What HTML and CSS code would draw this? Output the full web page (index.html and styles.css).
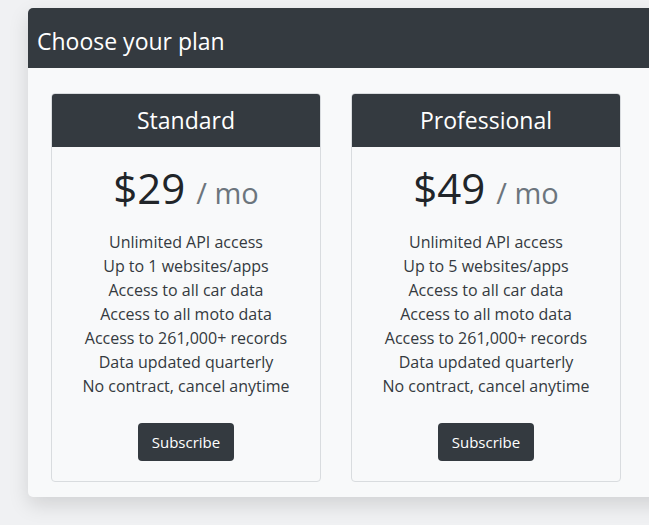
FILE: index.html
```html
<!DOCTYPE html>
<html>
<head>
<meta charset="utf-8">
<link rel="stylesheet" href="styles.css">
</head>
<body>
<div class="page">
  <div class="panel">
    <div class="panel-head">Choose your plan</div>
    <div class="panel-body">
      <div class="plan">
        <div class="plan-head">Standard</div>
        <div class="plan-body">
          <div class="price">$29 <span class="per">/ mo</span></div>
          <ul class="features">
            <li>Unlimited API access</li>
            <li>Up to 1 websites/apps</li>
            <li>Access to all car data</li>
            <li>Access to all moto data</li>
            <li>Access to 261,000+ records</li>
            <li>Data updated quarterly</li>
            <li>No contract, cancel anytime</li>
          </ul>
          <button class="btn">Subscribe</button>
        </div>
      </div>
      <div class="plan">
        <div class="plan-head">Professional</div>
        <div class="plan-body">
          <div class="price">$49 <span class="per">/ mo</span></div>
          <ul class="features">
            <li>Unlimited API access</li>
            <li>Up to 5 websites/apps</li>
            <li>Access to all car data</li>
            <li>Access to all moto data</li>
            <li>Access to 261,000+ records</li>
            <li>Data updated quarterly</li>
            <li>No contract, cancel anytime</li>
          </ul>
          <button class="btn">Subscribe</button>
        </div>
      </div>
    </div>
  </div>
</div>
</body>
</html>
```
FILE: styles.css
```css
html, body {
  margin: 0;
  padding: 0;
  background: #f0f1f3;
  overflow: hidden;
}
body {
  font-family: "Open Sans", "Noto Sans", sans-serif;
  color: #212529;
}
.page {
  width: 649px;
  height: 525px;
  overflow: hidden;
  padding: 8px 0 0 28px;
  box-sizing: border-box;
}
.panel {
  width: 680px;
  background: #f8f9fa;
  border-radius: 5px;
  box-shadow: 0 8px 20px rgba(0, 0, 0, 0.13);
  overflow: hidden;
}
.panel-head {
  height: 60px;
  background: #343a40;
  color: #fff;
  font-size: 23px;
  padding-left: 9px;
  box-sizing: border-box;
  padding-top: 6px;
  line-height: 54px;
}
.panel-body {
  display: flex;
  gap: 30px;
  padding: 25px 0 15px 23px;
}
.plan {
  width: 270px;
  border: 1px solid #d9dcdf;
  border-radius: 4px;
  box-sizing: border-box;
  overflow: hidden;
  background: #f8f9fa;
}
.plan-head {
  height: 53px;
  background: #343a40;
  color: #fff;
  font-size: 23px;
  line-height: 53px;
  text-align: center;
}
.plan-body {
  display: flex;
  flex-direction: column;
  align-items: center;
  padding: 21px 0 20px;
}
.price {
  font-size: 42px;
  line-height: 40px;
  height: 40px;
  color: #212529;
}
.per {
  font-size: 29px;
  color: #6c757d;
}
.features {
  list-style: none;
  margin: 22px 0 0;
  padding: 0;
  text-align: center;
  font-size: 16px;
  line-height: 24px;
  color: #343a40;
}
.btn {
  margin-top: 25px;
  width: 96px;
  height: 38px;
  background: #343a40;
  color: #fff;
  border: 0;
  border-radius: 4px;
  font-family: inherit;
  font-size: 15px;
  padding: 0;
}
```
